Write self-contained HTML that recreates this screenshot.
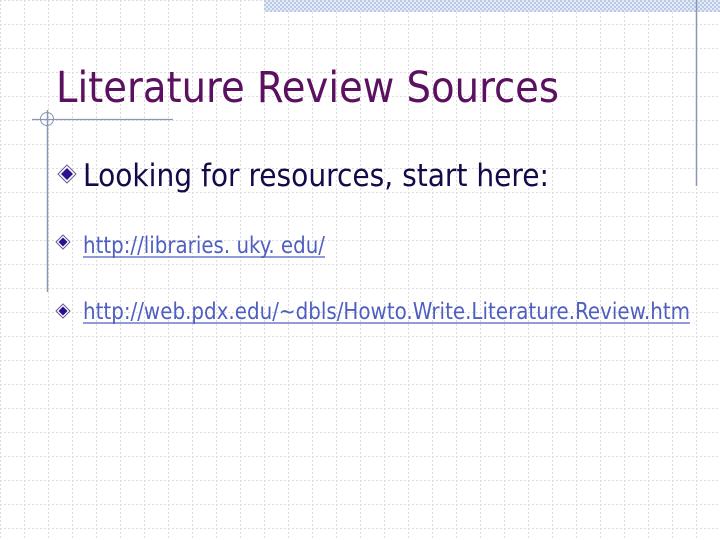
<!DOCTYPE html>
<html><head><meta charset="utf-8"><style>
html,body{margin:0;padding:0;background:#fff;width:720px;height:540px;overflow:hidden}
svg{display:block}
text{font-family:"DejaVu Sans Condensed","DejaVu Sans","Liberation Sans",sans-serif}
</style></head><body>
<svg width="720" height="540" xmlns="http://www.w3.org/2000/svg">
<defs>
<pattern id="g" width="24" height="24" patternUnits="userSpaceOnUse">
<path d="M0 0.5H24M0.5 0V24" stroke="#dcdcdc" stroke-width="1" stroke-dasharray="2 2" fill="none"/>
</pattern>
<pattern id="c" width="4" height="4" patternUnits="userSpaceOnUse">
<rect width="4" height="4" fill="#e4ebf5"/><rect width="2" height="2" fill="#b9c8e4"/><rect x="2" y="2" width="2" height="2" fill="#b9c8e4"/>
</pattern>
</defs>
<rect width="720" height="540" fill="url(#g)"/>
<rect x="264" y="0" width="456" height="12" fill="url(#c)"/>
<line x1="696.5" y1="0" x2="696.5" y2="186" stroke="#8a96b4" stroke-width="1.5"/>
<line x1="32" y1="119.5" x2="173" y2="119.5" stroke="#8a96b4" stroke-width="1.2"/>
<line x1="47.5" y1="110" x2="47.5" y2="292" stroke="#8a96b4" stroke-width="1.5"/>
<circle cx="47" cy="119" r="6.5" fill="none" stroke="#8a96b4" stroke-width="1"/>
<text x="56" y="102" font-size="43" fill="#5c1060" textLength="503" lengthAdjust="spacingAndGlyphs">Literature Review Sources</text>
<g>
<path d="M67 165 L76 174 L67 183 L58 174Z" fill="#fff" stroke="#6a5a90" stroke-width="1"/>
<path d="M67 168 L73 174 L67 180 L61 174Z" fill="#2a1090"/>
</g>
<text x="83" y="186" font-size="31" fill="#140a4a" textLength="466" lengthAdjust="spacingAndGlyphs">Looking for resources, start here:</text>
<g>
<path d="M63 235 L70 242 L63 249 L56 242Z" fill="#fff" stroke="#6a5a90" stroke-width="1"/>
<path d="M63 237.5 L67.5 242 L63 246.5 L58.5 242Z" fill="#2a1090"/>
<path d="M63 304 L70 311 L63 318 L56 311Z" fill="#fff" stroke="#6a5a90" stroke-width="1"/>
<path d="M63 306.5 L67.5 311 L63 315.5 L58.5 311Z" fill="#2a1090"/>
</g>
<text x="83" y="253" font-size="23" fill="#4f5fc0" textLength="242" lengthAdjust="spacingAndGlyphs">http://libraries. uky. edu/</text>
<line x1="83" y1="257" x2="325" y2="257" stroke="#4f5fc0" stroke-width="1.3"/>
<text x="83" y="319" font-size="23" fill="#4f5fc0" textLength="607" lengthAdjust="spacingAndGlyphs">http://web.pdx.edu/~dbls/Howto.Write.Literature.Review.htm</text>
<line x1="83" y1="323" x2="690" y2="323" stroke="#4f5fc0" stroke-width="1.3"/>
</svg>
</body></html>
